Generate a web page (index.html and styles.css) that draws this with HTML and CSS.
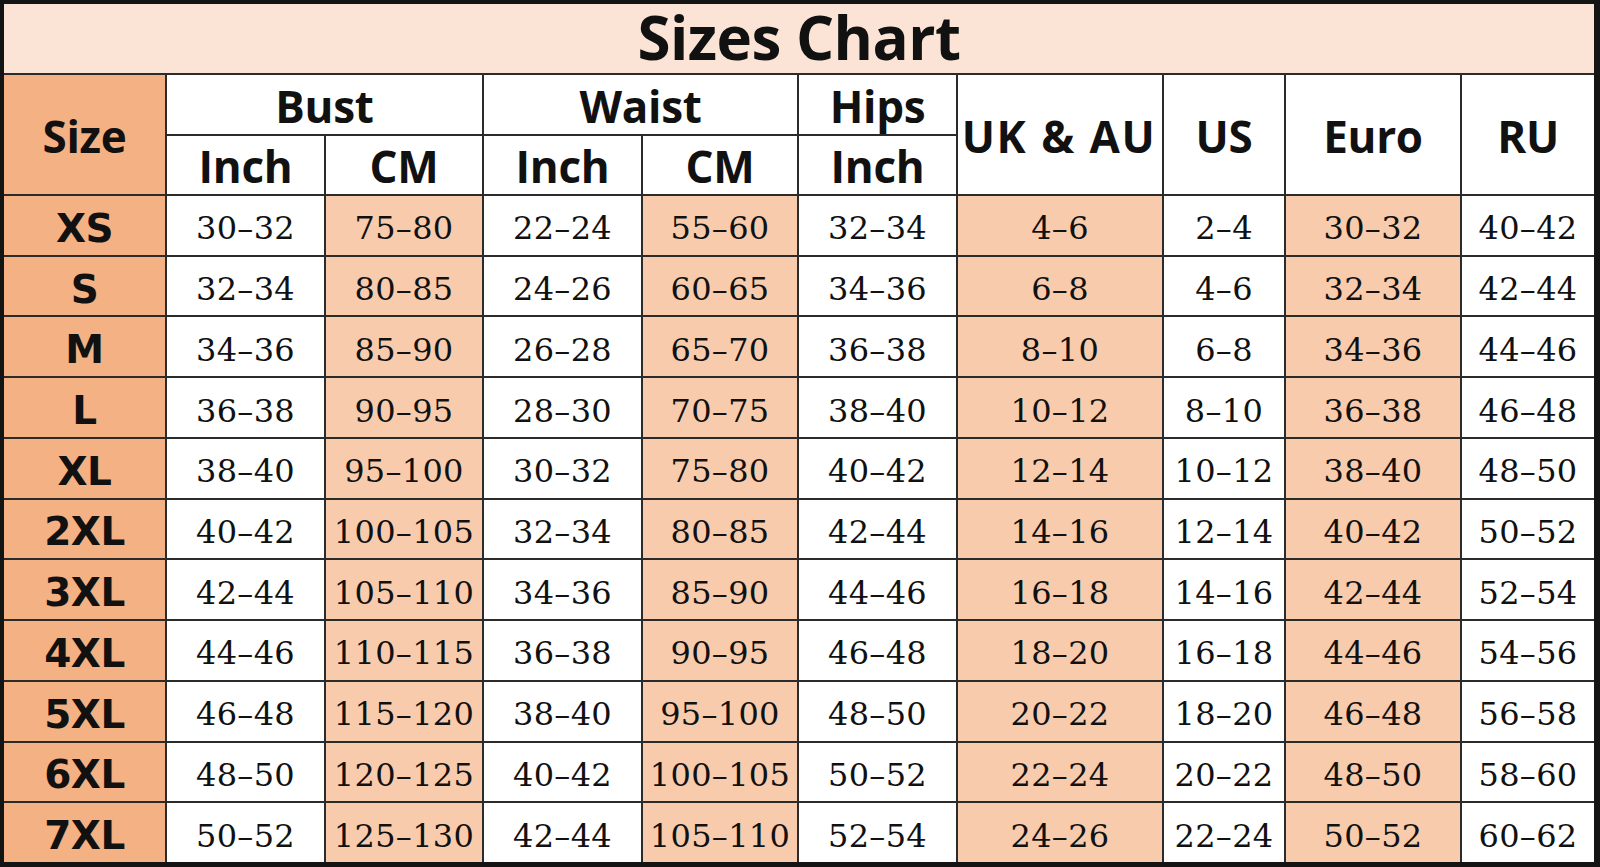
FILE: index.html
```html
<!DOCTYPE html>
<html lang="en">
<head>
<meta charset="utf-8">
<title>Sizes Chart</title>
<link rel="stylesheet" href="styles.css">
</head>
<body>
<div class="chart">
  <div class="title"><div class="title-text">Sizes Chart</div></div>

  <div class="hd size-hd">Size</div>
  <div class="hd grp2">Bust</div>
  <div class="hd grp2 waist">Waist</div>
  <div class="hd">Hips</div>
  <div class="hd tall ukau">UK &amp; AU</div>
  <div class="hd tall">US</div>
  <div class="hd tall">Euro</div>
  <div class="hd tall">RU</div>

  <div class="hd sub">Inch</div>
  <div class="hd sub">CM</div>
  <div class="hd sub">Inch</div>
  <div class="hd sub">CM</div>
  <div class="hd sub">Inch</div>

  <div class="lbl">XS</div><div class="v">30–32</div><div class="v hl">75–80</div><div class="v">22–24</div><div class="v hl">55–60</div><div class="v">32–34</div><div class="v hl">4–6</div><div class="v">2–4</div><div class="v hl">30–32</div><div class="v">40–42</div>
  <div class="lbl">S</div><div class="v">32–34</div><div class="v hl">80–85</div><div class="v">24–26</div><div class="v hl">60–65</div><div class="v">34–36</div><div class="v hl">6–8</div><div class="v">4–6</div><div class="v hl">32–34</div><div class="v">42–44</div>
  <div class="lbl">M</div><div class="v">34–36</div><div class="v hl">85–90</div><div class="v">26–28</div><div class="v hl">65–70</div><div class="v">36–38</div><div class="v hl">8–10</div><div class="v">6–8</div><div class="v hl">34–36</div><div class="v">44–46</div>
  <div class="lbl">L</div><div class="v">36–38</div><div class="v hl">90–95</div><div class="v">28–30</div><div class="v hl">70–75</div><div class="v">38–40</div><div class="v hl">10–12</div><div class="v">8–10</div><div class="v hl">36–38</div><div class="v">46–48</div>
  <div class="lbl">XL</div><div class="v">38–40</div><div class="v hl">95–100</div><div class="v">30–32</div><div class="v hl">75–80</div><div class="v">40–42</div><div class="v hl">12–14</div><div class="v">10–12</div><div class="v hl">38–40</div><div class="v">48–50</div>
  <div class="lbl">2XL</div><div class="v">40–42</div><div class="v hl">100–105</div><div class="v">32–34</div><div class="v hl">80–85</div><div class="v">42–44</div><div class="v hl">14–16</div><div class="v">12–14</div><div class="v hl">40–42</div><div class="v">50–52</div>
  <div class="lbl">3XL</div><div class="v">42–44</div><div class="v hl">105–110</div><div class="v">34–36</div><div class="v hl">85–90</div><div class="v">44–46</div><div class="v hl">16–18</div><div class="v">14–16</div><div class="v hl">42–44</div><div class="v">52–54</div>
  <div class="lbl">4XL</div><div class="v">44–46</div><div class="v hl">110–115</div><div class="v">36–38</div><div class="v hl">90–95</div><div class="v">46–48</div><div class="v hl">18–20</div><div class="v">16–18</div><div class="v hl">44–46</div><div class="v">54–56</div>
  <div class="lbl">5XL</div><div class="v">46–48</div><div class="v hl">115–120</div><div class="v">38–40</div><div class="v hl">95–100</div><div class="v">48–50</div><div class="v hl">20–22</div><div class="v">18–20</div><div class="v hl">46–48</div><div class="v">56–58</div>
  <div class="lbl">6XL</div><div class="v">48–50</div><div class="v hl">120–125</div><div class="v">40–42</div><div class="v hl">100–105</div><div class="v">50–52</div><div class="v hl">22–24</div><div class="v">20–22</div><div class="v hl">48–50</div><div class="v">58–60</div>
  <div class="lbl">7XL</div><div class="v">50–52</div><div class="v hl">125–130</div><div class="v">42–44</div><div class="v hl">105–110</div><div class="v">52–54</div><div class="v hl">24–26</div><div class="v">22–24</div><div class="v hl">50–52</div><div class="v">60–62</div>
</div>
</body>
</html>
```

FILE: styles.css
```css
html, body {
  margin: 0;
  padding: 0;
  background: #ffffff;
}

.chart {
  box-sizing: border-box;
  width: 1600px;
  height: 867px;
  border-style: solid;
  border-color: #141414;
  border-width: 4px 6px 5px 4px;
  background: #2b2b2b;
  display: grid;
  grid-template-columns: 161px 157px 156px 157px 154px 157px 204px 120px 174px 132px;
  grid-template-rows: 69px 59px 58px repeat(11, 1fr);
  gap: 2px;
  color: #111111;
}

.chart > div {
  display: flex;
  align-items: center;
  justify-content: center;
  white-space: nowrap;
  box-sizing: border-box;
}

.title {
  grid-column: 1 / -1;
  background: #fbe4d6;
}

.title-text {
  display: block;
  font-family: "Open Sans", "Liberation Sans", sans-serif;
  font-weight: 700;
  font-size: 60px;
  line-height: 60px;
  height: 60px;
  letter-spacing: -0.5px;
  margin-top: -4px;
}

.hd {
  background: #ffffff;
  font-family: "Open Sans", "Liberation Sans", sans-serif;
  font-weight: 700;
  font-size: 44px;
  line-height: 1;
  letter-spacing: -0.3px;
  padding-top: 2px;
}

.size-hd {
  grid-row: span 2;
  background: #f4b183;
}

.grp2 {
  grid-column: span 2;
}

.tall {
  grid-row: span 2;
}

.ukau {
  letter-spacing: 1.5px;
  word-spacing: 1px;
  padding-right: 2px;
}

.lbl {
  background: #f4b183;
  font-family: "DejaVu Sans", "Open Sans", sans-serif;
  font-weight: 700;
  font-size: 39px;
  line-height: 1;
  letter-spacing: -0.5px;
  padding-top: 6px;
}

.v {
  background: #ffffff;
  font-family: "DejaVu Serif", "Liberation Serif", serif;
  font-size: 32px;
  line-height: 1;
  letter-spacing: 0.3px;
  padding-top: 6px;
}

.v.hl {
  background: #f8cbad;
}
```
